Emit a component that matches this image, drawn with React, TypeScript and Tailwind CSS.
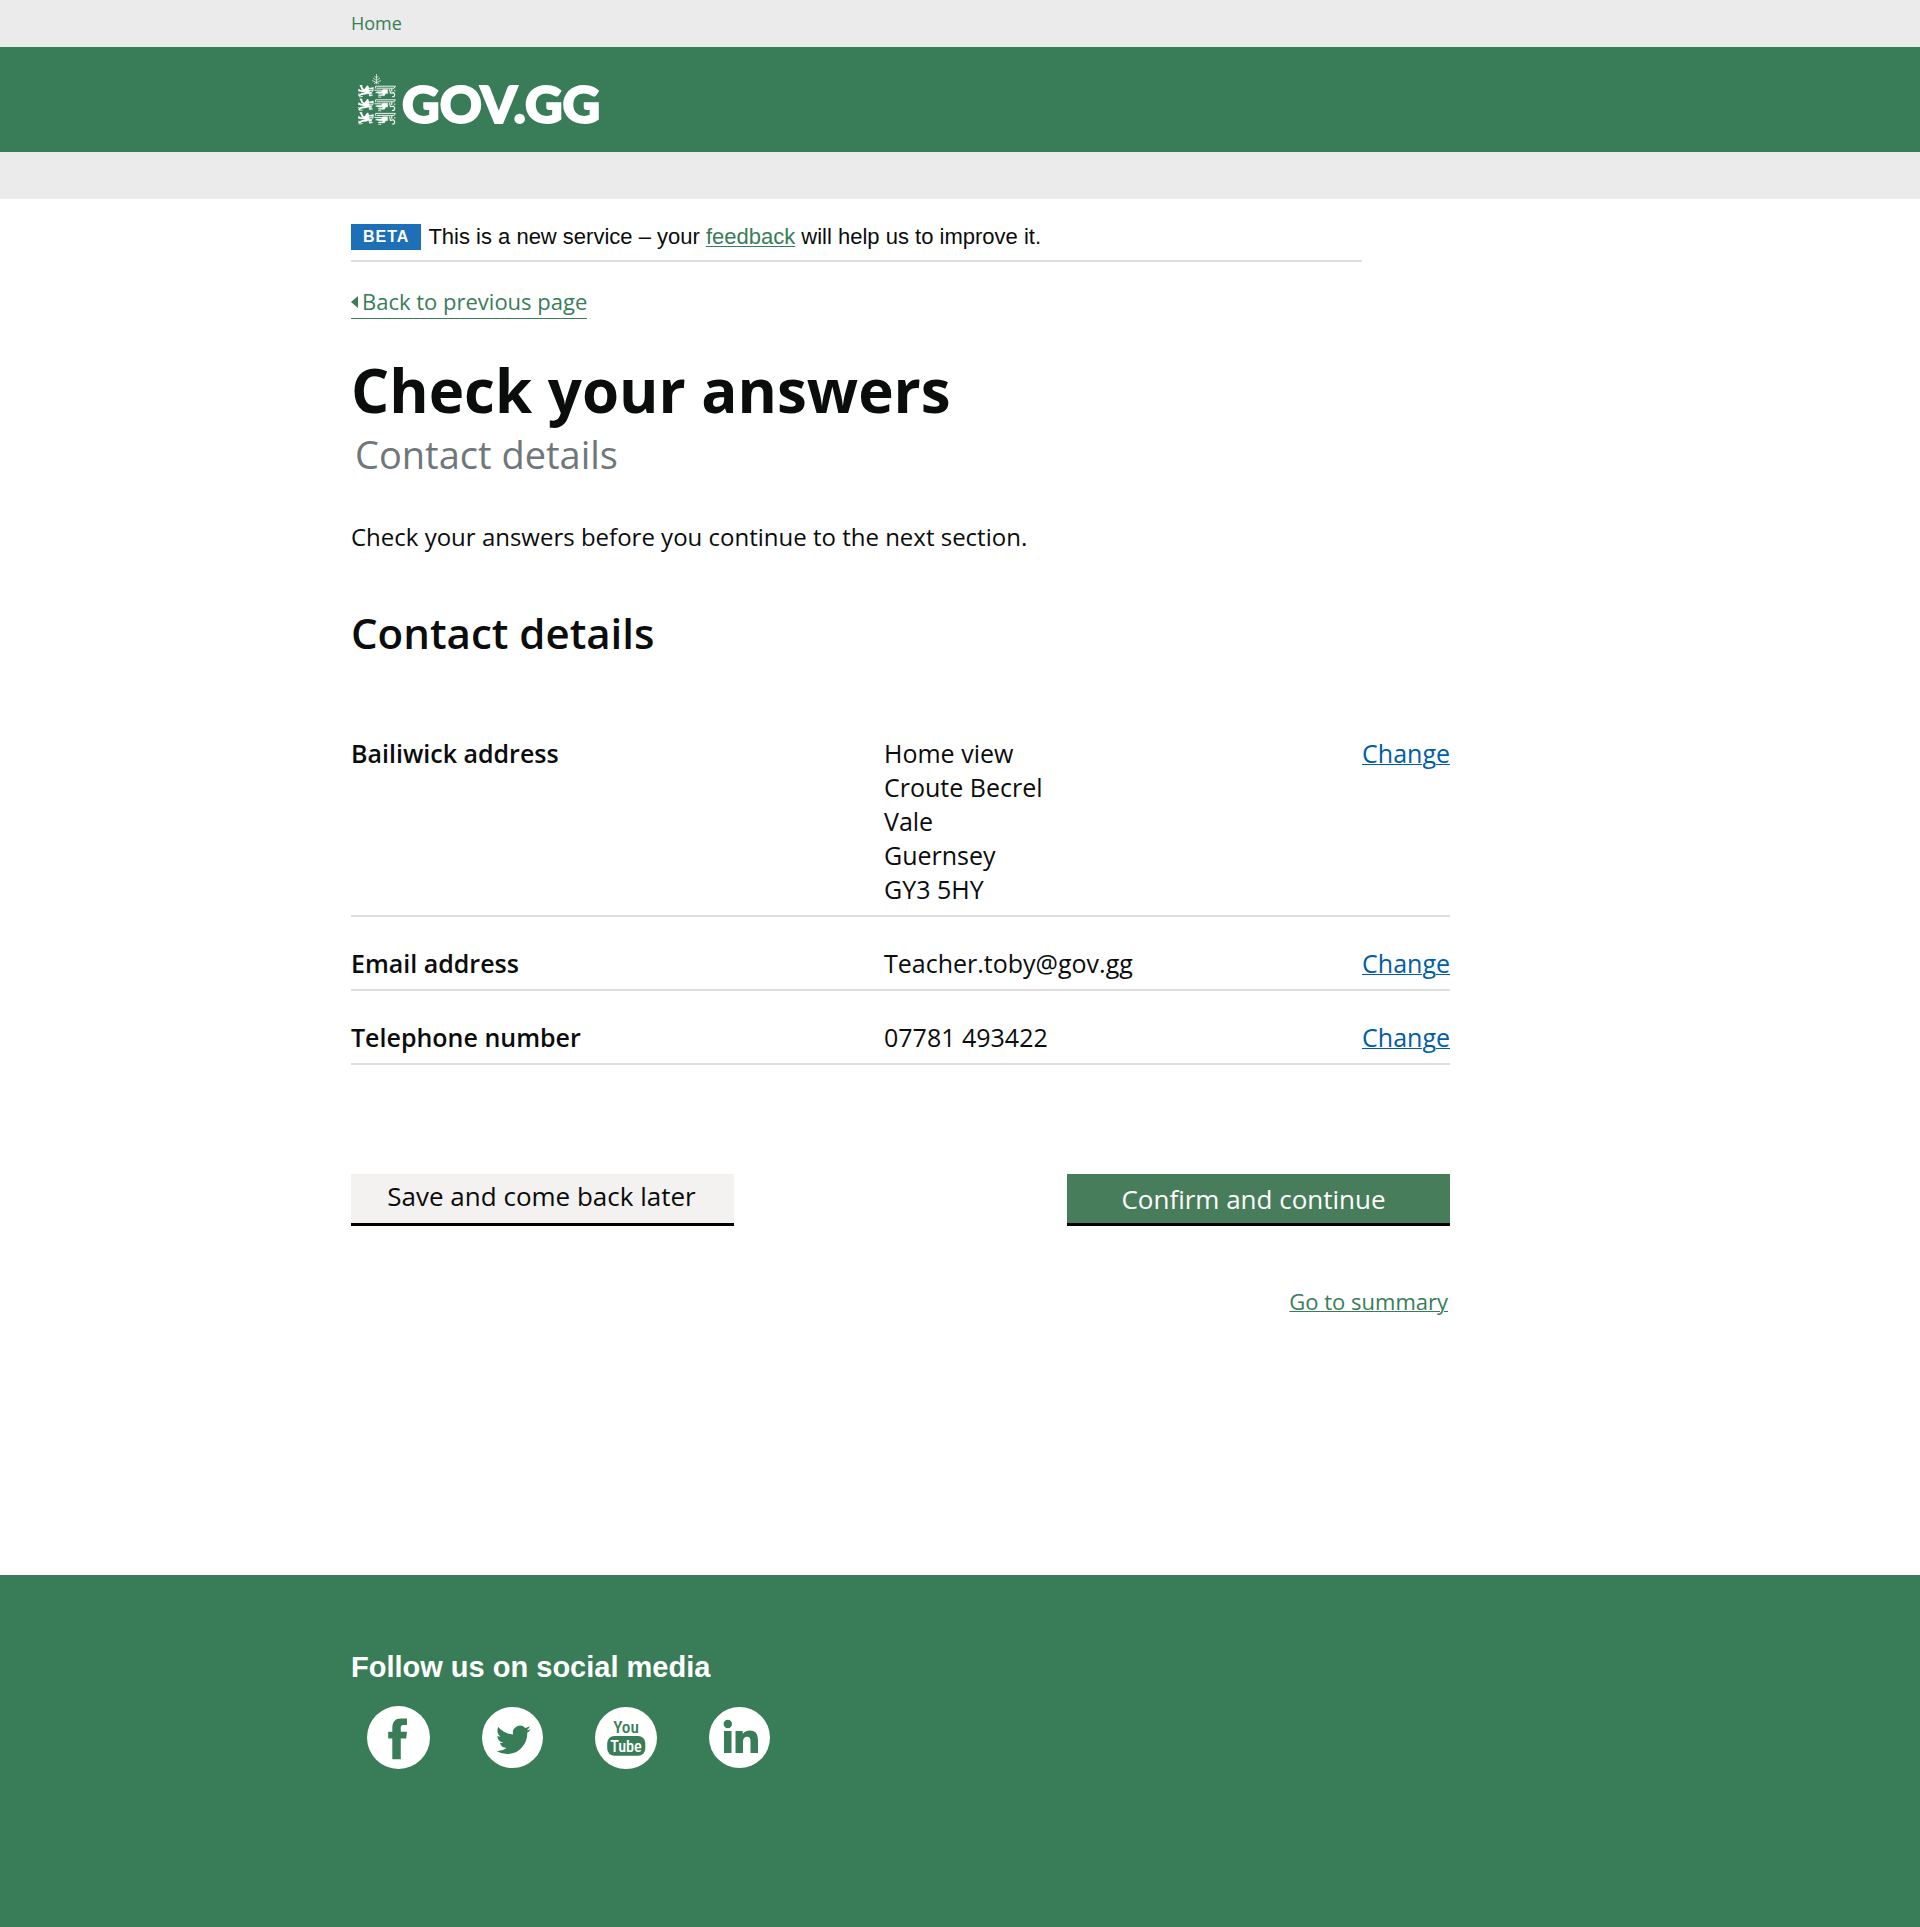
import React from 'react';

const answers = [
  {
    label: 'Bailiwick address',
    lines: ['Home view', 'Croute Becrel', 'Vale', 'Guernsey', 'GY3 5HY'],
  },
  { label: 'Email address', lines: ['Teacher.toby@gov.gg'] },
  { label: 'Telephone number', lines: ['07781 493422'] },
];

function Container({ children }: { children: React.ReactNode }) {
  return <div className="mx-auto w-full max-w-[1218px]">{children}</div>;
}

function Lion({ y }: { y: number }) {
  return (
    <g transform={`translate(0 ${y})`} fill="none" stroke="#fff" strokeLinecap="round" strokeLinejoin="round">
      <path strokeWidth="1.8" d="M3 1 4.4 4 7.4 5.8M1 5.6 4.4 6.2 8.4 6.8M9.600 1.400 7.400 4.400M1.200 10.600 3.600 9 8 8.400" />
      <path strokeWidth=".8" d="M.4 9 2 9.400M1.600 11.800 4.400 11.400M.4 4.400 1.800 4.800M2 .4 4 .6" />
      <path fill="#fff" strokeWidth=".5" d="M7.500 4.800 10.500 2 11 3.400 15.400 2.400 15.200 5.400 13.400 8 14.400 10.600 11.400 11 11.200 8.400 8 8.800Z" />
      <path stroke="#387d57" strokeWidth=".8" d="M11.200 4.600 14.400 4.800M11.800 6.600 13.800 6.400M12.600 9.200 13.400 9.400" />
      <path strokeWidth=".9" d="M17.600 3.200V1.200H37.400L36.200 3.200H19M16.800 5.200H22L24.800 5.600" />
      <path fill="#fff" strokeWidth=".5" d="M25 4.600H29.600V8.400L27.800 8.200 26.400 10.600H20.600V9.800H24.200L24.800 8.200 22 8.600 17.600 7.600 19 6.800 23.400 6.800Z" />
      <path strokeWidth="1.100" d="M31.600 4.600 32.400 8.200 35.400 7.600 36.800 9.400 36 11.800H34.400M33.800 3.800V6" />
      <path strokeWidth=".8" d="M20.600 12 22.800 12.200M36.800 5.200V6.200" />
    </g>
  );
}

function Crest() {
  return (
    <svg width="40" height="54" viewBox="0 0 40 54" aria-hidden="true">
      <path
        d="M18.500 0V10M18.500 4 16.500 2M18.500 4 20.500 2M18.500 6.500 15 4M18.500 6.500 22 4M18.500 8.500 14 6.500M18.500 8.500 23 6.500M16 9.500 18.500 8.500 21 9.500"
        stroke="#e2efe7"
        strokeWidth=".8"
        fill="none"
      />
      <Lion y={11} />
      <Lion y={24.600} />
      <Lion y={38.200} />
    </svg>
  );
}

function SocialLink({ label, size, children }: { label: string; size: number; children: React.ReactNode }) {
  return (
    <a href="#" aria-label={label} className="block">
      <svg width={size} height={size} viewBox="0 0 61 61" aria-hidden="true">
        <circle cx="30.5" cy="30.5" r="30.500" fill="#fff" />
        {children}
      </svg>
    </a>
  );
}

export default function App() {
  return (
    <div className="min-h-screen bg-white font-['Open_Sans',sans-serif] text-[#0b0c0c]">
      <nav className="bg-[#ebebeb]">
        <Container>
          <a href="#" className="block text-[18px] leading-[47px] text-[#387d57]">Home</a>
        </Container>
      </nav>

      <header className="bg-[#387d57]">
        <Container>
          <a href="#" className="flex h-[105px] items-center gap-1 pt-[3px] pl-[7px] text-white">
            <Crest />
            <span className="pt-1 font-['Lato',sans-serif] text-[52px] leading-[56px] font-black [-webkit-text-stroke:2px_white]">GOV.GG</span>
          </a>
        </Container>
      </header>
      <div className="h-[47px] bg-[#ebebeb]" />

      <Container>
        <main className="max-w-[1099px] pt-[25px] pb-[257px]">
          <div className="flex max-w-[1011px] items-center gap-[7px] border-b-2 border-[#dedede] pb-[10px] font-['Liberation_Sans',sans-serif]">
            <strong className="bg-[#1d70b8] px-3 text-[16px] leading-[26px] tracking-[1px] text-white">BETA</strong>
            <p className="text-[22px] leading-[26px]">
              This is a new service – your{' '}
              <a href="#" className="text-[#387d57] underline decoration-1 underline-offset-2">feedback</a> will help us to improve it.
            </p>
          </div>

          <a href="#" className="mt-6 flex w-fit items-center gap-1 border-b border-[#387d57] pb-[2px] text-[22px] leading-[30px] text-[#387d57]">
            <svg width="7" height="12" viewBox="0 0 7 12" fill="currentColor" className="mt-[2px]" aria-hidden="true">
              <path d="M7 0V12L0 6Z" />
            </svg>
            Back to previous page
          </a>

          <h1 className="mt-[35px] text-[60px] leading-[72px] font-bold">Check your answers</h1>
          <p className="mt-1 pl-1 text-[38px] leading-[48px] text-[#6f777b]">Contact details</p>
          <p className="mt-[42px] text-[24px] leading-[34px]">Check your answers before you continue to the next section.</p>
          <h2 className="mt-[51px] text-[42px] leading-[56px] font-semibold">Contact details</h2>

          <table className="mt-[46px] w-full text-left text-[25px] leading-[34px]">
            <tbody>
              {answers.map((row) => (
                <tr key={row.label} className="border-b-2 border-[#dedede] align-top">
                  <th scope="row" className="w-[533px] pt-[29px] pb-[9px] font-semibold">{row.label}</th>
                  <td className="pt-[29px] pb-[9px]">
                    {row.lines.map((line) => (
                      <div key={line}>{line}</div>
                    ))}
                  </td>
                  <td className="pt-[29px] pb-[9px] text-right">
                    <a href="#" aria-label={`Change ${row.label}`} className="text-[#005ea5] underline decoration-1">Change</a>
                  </td>
                </tr>
              ))}
            </tbody>
          </table>

          <div className="mt-[109px] flex justify-between">
            <button type="button" className="h-[52px] w-[383px] border-b-[3px] border-black bg-[#f3f2f1] pr-[2px] pb-[6px] text-[26px] leading-[34px]">
              Save and come back later
            </button>
            <button type="button" className="h-[52px] w-[383px] border-b-[3px] border-black bg-[#477d5a] pr-[10px] text-[26px] leading-[34px] text-white">
              Confirm and continue
            </button>
          </div>

          <div className="mt-[60px] pr-[2px] pb-[2px] text-right text-[22px] leading-[30px]">
            <a href="#" className="text-[#387d57] underline decoration-1">Go to summary</a>
          </div>
        </main>
      </Container>

      <footer className="bg-[#387d57] pt-[72px] pb-[158px]">
        <Container>
          <h2 className="font-['Liberation_Sans',sans-serif] text-[29px] leading-[40px] font-bold text-white">Follow us on social media</h2>
          <div className="mt-[19px] flex items-center gap-[52px] pl-4">
            <SocialLink label="Facebook" size={63}>
              <path fill="#387d57" d="M24.500 51.500V31.500H20.500V25H24.500V21.500C24.500 15 27.500 12 33 12H38.700V18.500H35C33.300 18.500 32.700 19.300 32.700 21V25H38.700L38 31.500H32.700V51.500Z" />
            </SocialLink>
            <SocialLink label="Twitter" size={61}>
              <path
                fill="#387d57"
                transform="translate(14 15.500) scale(1.450)"
                d="M23.950 4.570a10 10 0 0 1-2.820.77 4.960 4.960 0 0 0 2.160-2.720c-.95.56-2 .96-3.130 1.180a4.920 4.920 0 0 0-8.380 4.480C7.690 8.100 4.070 6.130 1.640 3.160a4.820 4.820 0 0 0-.67 2.480c0 1.710.87 3.210 2.190 4.100a4.900 4.900 0 0 1-2.230-.62v.06a4.920 4.920 0 0 0 3.950 4.830 5 5 0 0 1-2.210.08 4.940 4.940 0 0 0 4.600 3.420A9.870 9.870 0 0 1 0 19.540a13.990 13.990 0 0 0 7.550 2.210c9.050 0 14-7.500 14-13.980 0-.21 0-.42-.02-.63a9.940 9.940 0 0 0 2.460-2.550z"
              />
            </SocialLink>
            <SocialLink label="YouTube" size={62}>
              <rect x="12" y="28.500" width="37.500" height="19.500" rx="7" fill="#387d57" />
              <g fontFamily="'Liberation Sans Narrow','Roboto Condensed',Roboto,sans-serif" fontWeight="500" textAnchor="middle">
                <text x="30.500" y="25.500" fontSize="17" fill="#387d57">You</text>
                <text x="30.500" y="44" fontSize="16" fill="#fff">Tube</text>
              </g>
            </SocialLink>
            <SocialLink label="LinkedIn" size={61}>
              <g fill="#387d57">
                <circle cx="18.800" cy="17" r="4.200" />
                <path d="M15 24H22.500V46H15ZM26.500 24H33.700V27C35 24.800 37.500 23.400 40.800 23.400 47 23.400 49 27.500 49 33.500V46H41.500V34.500C41.500 31.500 40.800 29.800 38.300 29.800 35.400 29.800 34 31.800 34 34.700V46H26.500Z" />
              </g>
            </SocialLink>
          </div>
        </Container>
      </footer>
    </div>
  );
}
